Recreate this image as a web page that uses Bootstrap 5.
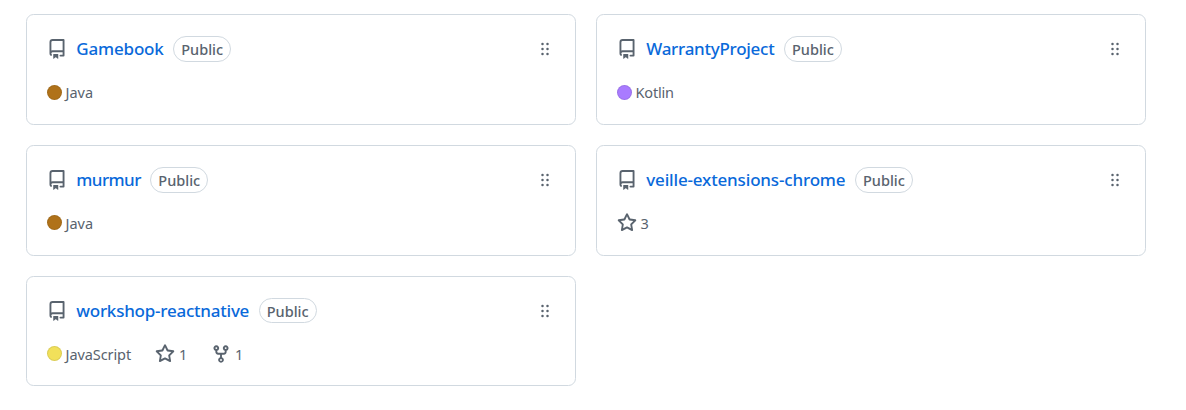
<!DOCTYPE html>
<html lang="en">
<head>
<meta charset="utf-8">
<meta name="viewport" content="width=device-width, initial-scale=1">
<title>Pinned repositories</title>
<link rel="stylesheet" href="https://cdn.jsdelivr.net/npm/bootstrap@5.3.0/dist/css/bootstrap.min.css">
<style>
body { font-family: "Noto Sans", sans-serif; font-size: 14.5px; line-height: 20px; color: #59636e; background: #fff; overflow: hidden; }
.pins { width: 1120px; margin: 14px 0 0 26px; display: grid; grid-template-columns: 1fr 1fr; gap: 20px; }
.repo { height: 111px; padding: 20px; border: 1px solid #d1d9e0; border-radius: 7.5px; }
.repo-last { height: 110px; }
.repo-head { height: 28px; }
.oct { width: 20px; height: 20px; fill: #59636e; flex: none; display: block; }
.repo-name { color: #0969da; font-size: 17px; font-weight: 500; line-height: 26px; margin-left: 9.25px; text-decoration: none; white-space: nowrap; }
.visibility { width: 58px; height: 26px; margin-left: 9.5px; border: 1px solid #d1d9e0; border-radius: 40px; font-weight: 500; line-height: 25px; text-align: center; flex: none; }
.repo-last .visibility { height: 25px; margin-bottom: 1px; }
.repo-meta { height: 20px; margin-top: 19px; }
.swatch { width: 15px; height: 15px; border: 1px solid rgba(31,35,40,.1); border-radius: 50%; margin: 2px 3.5px 0 0; align-self: flex-start; }
.row-one .swatch { margin-top: 3px; }
.java { background: #b07219; }
.kotlin { background: #a97bff; }
.javascript { background: #f1e05a; }
.fit-a { letter-spacing: -.17px; }
.fit-b { letter-spacing: -.26px; }
.fit-c { letter-spacing: -.56px; }
.fit-d { letter-spacing: -.16px; }
.fit-e { letter-spacing: -.23px; }
.fit-js { letter-spacing: -.08px; }
.stat { margin-left: 23.8px; }
.stat:first-child { margin-left: 0; }
.stat .oct { margin-right: 4px; }
.stat:first-child .oct { margin-right: 3.5px; }
</style>
</head>
<body>
<svg class="d-none">
<symbol id="repo" viewBox="0 0 16 16"><path d="M2 2.5A2.5 2.5 0 0 1 4.5 0h8.75a.75.75 0 0 1 .75.75v12.5a.75.75 0 0 1-.75.75h-2.5a.75.75 0 0 1 0-1.5h1.75v-2h-8a1 1 0 0 0-.714 1.7.75.75 0 1 1-1.072 1.05A2.495 2.495 0 0 1 2 11.5Zm10.5-1h-8a1 1 0 0 0-1 1v6.708A2.486 2.486 0 0 1 4.5 9h8ZM5 12.25a.25.25 0 0 1 .25-.25h3.5a.25.25 0 0 1 .25.25v3.25a.25.25 0 0 1-.4.2l-1.45-1.087a.249.249 0 0 0-.3 0L5.4 15.7a.25.25 0 0 1-.4-.2Z"/></symbol>
<symbol id="grabber" viewBox="0 0 16 16"><path d="M10 13a1 1 0 1 1 0-2 1 1 0 0 1 0 2Zm0-4a1 1 0 1 1 0-2 1 1 0 0 1 0 2Zm-4 4a1 1 0 1 1 0-2 1 1 0 0 1 0 2Zm5-9a1 1 0 1 1-2 0 1 1 0 0 1 2 0ZM7 8a1 1 0 1 1-2 0 1 1 0 0 1 2 0ZM6 5a1 1 0 1 1 0-2 1 1 0 0 1 0 2Z"/></symbol>
<symbol id="star" viewBox="0 0 16 16"><path d="M8 .25a.75.75 0 0 1 .673.418l1.882 3.815 4.21.612a.75.75 0 0 1 .416 1.279l-3.046 2.97.719 4.192a.751.751 0 0 1-1.088.791L8 12.347l-3.766 1.98a.75.75 0 0 1-1.088-.79l.72-4.194L.818 6.374a.75.75 0 0 1 .416-1.28l4.21-.611L7.327.668A.75.75 0 0 1 8 .25Zm0 2.445L6.615 5.5a.75.75 0 0 1-.564.41l-3.097.45 2.24 2.184a.75.75 0 0 1 .216.664l-.528 3.084 2.769-1.456a.75.75 0 0 1 .698 0l2.77 1.456-.53-3.084a.75.75 0 0 1 .216-.664l2.24-2.183-3.096-.45a.75.75 0 0 1-.564-.41L8 2.694Z"/></symbol>
<symbol id="fork" viewBox="0 0 16 16"><path d="M5 5.372v.878c0 .414.336.75.75.75h4.5a.75.75 0 0 0 .75-.75v-.878a2.25 2.25 0 1 1 1.5 0v.878a2.25 2.25 0 0 1-2.25 2.25h-1.5v2.128a2.251 2.251 0 1 1-1.5 0V8.5h-1.5A2.25 2.25 0 0 1 3.5 6.25v-.878a2.25 2.25 0 1 1 1.5 0ZM5 3.25a.75.75 0 1 0-1.5 0 .75.75 0 0 0 1.5 0Zm6.75.75a.75.75 0 1 0 0-1.5.75.75 0 0 0 0 1.5Zm-3 8.75a.75.75 0 1 0-1.5 0 .75.75 0 0 0 1.5 0Z"/></symbol>
</svg>
<main class="pins">
  <article class="repo row-one">
    <div class="repo-head d-flex align-items-center">
      <svg class="oct"><use href="#repo"/></svg><a href="#" class="repo-name fit-a">Gamebook</a><span class="visibility">Public</span><svg class="oct ms-auto"><use href="#grabber"/></svg>
    </div>
    <div class="repo-meta d-flex align-items-center"><span class="swatch java"></span><span>Java</span></div>
  </article>
  <article class="repo row-one">
    <div class="repo-head d-flex align-items-center">
      <svg class="oct"><use href="#repo"/></svg><a href="#" class="repo-name fit-b">WarrantyProject</a><span class="visibility">Public</span><svg class="oct ms-auto"><use href="#grabber"/></svg>
    </div>
    <div class="repo-meta d-flex align-items-center"><span class="swatch kotlin"></span><span class="fit-a">Kotlin</span></div>
  </article>
  <article class="repo">
    <div class="repo-head d-flex align-items-center">
      <svg class="oct"><use href="#repo"/></svg><a href="#" class="repo-name fit-c">murmur</a><span class="visibility">Public</span><svg class="oct ms-auto"><use href="#grabber"/></svg>
    </div>
    <div class="repo-meta d-flex align-items-center"><span class="swatch java"></span><span>Java</span></div>
  </article>
  <article class="repo">
    <div class="repo-head d-flex align-items-center">
      <svg class="oct"><use href="#repo"/></svg><a href="#" class="repo-name fit-d">veille-extensions-chrome</a><span class="visibility">Public</span><svg class="oct ms-auto"><use href="#grabber"/></svg>
    </div>
    <div class="repo-meta d-flex align-items-center"><span class="stat d-flex align-items-center"><svg class="oct"><use href="#star"/></svg>3</span></div>
  </article>
  <article class="repo repo-last">
    <div class="repo-head d-flex align-items-center">
      <svg class="oct"><use href="#repo"/></svg><a href="#" class="repo-name fit-e">workshop-reactnative</a><span class="visibility">Public</span><svg class="oct ms-auto"><use href="#grabber"/></svg>
    </div>
    <div class="repo-meta d-flex align-items-center"><span class="swatch javascript"></span><span class="fit-js">JavaScript</span><span class="stat d-flex align-items-center"><svg class="oct"><use href="#star"/></svg>1</span><span class="stat d-flex align-items-center"><svg class="oct"><use href="#fork"/></svg>1</span></div>
  </article>
</main>
<script src="https://cdn.jsdelivr.net/npm/bootstrap@5.3.0/dist/js/bootstrap.bundle.min.js"></script>
</body>
</html>
